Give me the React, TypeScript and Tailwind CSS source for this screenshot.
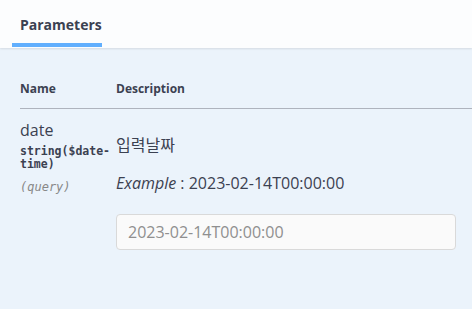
import React from "react";

const sans = "font-['Open_Sans','Noto_Sans_CJK_KR',sans-serif]";
const mono = "font-['DejaVu_Sans_Mono','Liberation_Mono',monospace]";

const App: React.FC = () => {
  return (
    <div className={`w-[472px] h-[309px] bg-[#ebf3fb] text-[#3b4151] ${sans} overflow-hidden`}>
      {/* Tab header */}
      <div className="h-[48px] bg-[#fcfdfe] shadow-[0_1px_2px_rgba(0,0,0,0.1)] flex items-end px-3">
        <div className="w-[90px] h-full flex flex-col justify-between">
          <h4 className="text-[14px] font-bold pt-[15px] pl-2 leading-[20px]">Parameters</h4>
          <div className="h-[4px] mb-[1px] bg-[#61affe]" />
        </div>
      </div>

      {/* Table */}
      <div className="pl-5 pt-[31px]">
        <div className="flex text-[12px] font-bold leading-[20px] pb-[9px] border-b border-[#aeb3bd]">
          <div className="w-[96px]">Name</div>
          <div>Description</div>
        </div>

        <div className="flex pt-[9px]">
          <div className="w-[96px] shrink-0">
            <div className="text-[16px] leading-[24px]">date</div>
            <div className={`${mono} text-[11.5px] font-bold leading-[13px] break-words mt-[3px]`}>
              string($date-time)
            </div>
            <div className={`${mono} text-[12px] italic text-[#888] leading-[14px] mt-[9px]`}>(query)</div>
          </div>
          <div className="flex-1 pt-[15px]">
            <p className="text-[16px] leading-[24px]">입력날짜</p>
            <p className="text-[16px] leading-[24px] mt-[14px]">
              <i>Example</i> : 2023-02-14T00:00:00
            </p>
            <input
              type="text"
              placeholder="2023-02-14T00:00:00"
              className="mt-[19px] w-[340px] h-[36px] rounded-[4px] border border-[#d9d9d9] bg-[#fafafa] px-[11px] text-[16px] placeholder-[#8f8f8f] focus:outline-none"
            />
          </div>
        </div>
      </div>
    </div>
  );
};

export default App;
